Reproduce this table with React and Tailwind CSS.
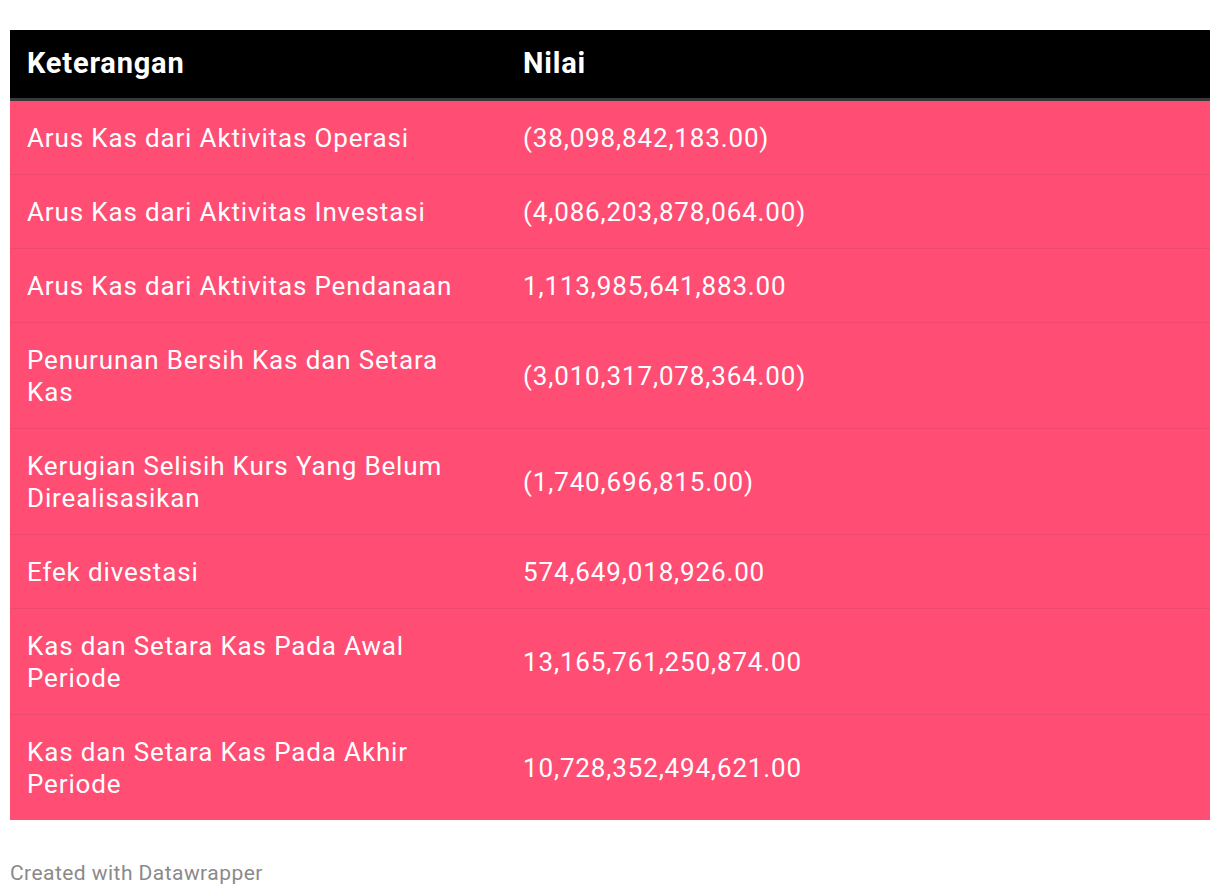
export default function App() {
  const rows = [
    ["Arus Kas dari Aktivitas Operasi", "(38,098,842,183.00)"],
    ["Arus Kas dari Aktivitas Investasi", "(4,086,203,878,064.00)"],
    ["Arus Kas dari Aktivitas Pendanaan", "1,113,985,641,883.00"],
    ["Penurunan Bersih Kas dan Setara Kas", "(3,010,317,078,364.00)"],
    ["Kerugian Selisih Kurs Yang Belum Direalisasikan", "(1,740,696,815.00)"],
    ["Efek divestasi", "574,649,018,926.00"],
    ["Kas dan Setara Kas Pada Awal Periode", "13,165,761,250,874.00"],
    ["Kas dan Setara Kas Pada Akhir Periode", "10,728,352,494,621.00"],
  ];
  return (
    <div className="bg-white w-[1220px] h-[896px] px-[10px] pt-[30px]" style={{ fontFamily: "Roboto, 'Liberation Sans', sans-serif" }}>
      <table className="w-[1200px] border-collapse table-fixed">
        <colgroup>
          <col className="w-[496px]" />
          <col />
        </colgroup>
        <thead>
          <tr className="bg-black text-white border-b-[3px] border-[#3a3a3a]">
            <th className="text-left font-bold text-[29px] tracking-[0.8px] leading-[32px] pl-[17px] pr-[17px] pt-[17px] pb-[19px]">Keterangan</th>
            <th className="text-left font-bold text-[29px] tracking-[0.8px] leading-[32px] pl-[17px] pr-[17px] pt-[17px] pb-[19px]">Nilai</th>
          </tr>
        </thead>
        <tbody>
          {rows.map((r, i) => (
            <tr key={i} className={`bg-[#ff4d74] text-white ${i < rows.length - 1 ? "border-b border-[#ec4a6e]" : ""}`}>
              <td className="text-[26px] tracking-[0.85px] leading-[32px] pl-[17px] pr-[17px] pt-[21px] pb-[20px] align-middle">{r[0]}</td>
              <td className="text-[26px] tracking-[0.85px] leading-[32px] pl-[17px] pr-[17px] pt-[21px] pb-[20px] align-middle">{r[1]}</td>
            </tr>
          ))}
        </tbody>
      </table>
      <div className="mt-[41px] text-[21px] tracking-[0.45px] leading-[24px] text-[#8a8a8a]">Created with Datawrapper</div>
    </div>
  );
}
